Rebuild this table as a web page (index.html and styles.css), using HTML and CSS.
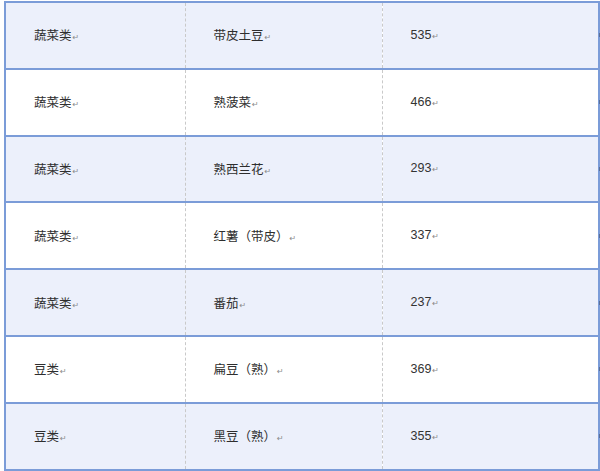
FILE: index.html
```html
<!DOCTYPE html>
<html>
<head>
<meta charset="utf-8">
<link rel="stylesheet" href="styles.css">
</head>
<body>
<div class="wrap">
<table class="grid">
<colgroup><col class="c1"><col class="c2"><col class="c3"></colgroup>
<tr class="alt"><td>蔬菜类<span class="rt">↵</span></td><td>带皮土豆<span class="rt">↵</span></td><td class="num">535<span class="rt">↵</span></td></tr>
<tr><td>蔬菜类<span class="rt">↵</span></td><td>熟菠菜<span class="rt">↵</span></td><td class="num">466<span class="rt">↵</span></td></tr>
<tr class="alt"><td>蔬菜类<span class="rt">↵</span></td><td>熟西兰花<span class="rt">↵</span></td><td class="num">293<span class="rt">↵</span></td></tr>
<tr><td>蔬菜类<span class="rt">↵</span></td><td>红薯（带皮）<span class="rt">↵</span></td><td class="num">337<span class="rt">↵</span></td></tr>
<tr class="alt"><td>蔬菜类<span class="rt">↵</span></td><td>番茄<span class="rt">↵</span></td><td class="num">237<span class="rt">↵</span></td></tr>
<tr><td>豆类<span class="rt">↵</span></td><td>扁豆（熟）<span class="rt">↵</span></td><td class="num">369<span class="rt">↵</span></td></tr>
<tr class="alt"><td>豆类<span class="rt">↵</span></td><td>黑豆（熟）<span class="rt">↵</span></td><td class="num">355<span class="rt">↵</span></td></tr>
</table>
</div>
</body>
</html>
```
FILE: styles.css
```css
html, body {
  margin: 0;
  padding: 0;
  background: #ffffff;
}
.wrap {
  padding: 1px 0 0 4px;
}
.grid {
  border-collapse: collapse;
  width: 594px;
  table-layout: fixed;
  font-family: "Noto Sans CJK SC", "Liberation Sans", sans-serif;
  font-size: 12.5px;
  color: #2e2e2e;
  border: 2px solid #7b9cd8;
}
.c1 { width: 180px; }
.c2 { width: 197px; }
.c3 { width: 217px; }
.grid tr {
  height: 66.8px;
}
.grid td {
  border-top: 2px solid #7b9cd8;
  border-bottom: 2px solid #7b9cd8;
  border-left: 1px dashed #c9c9c9;
  border-right: 1px dashed #c9c9c9;
  padding: 0 0 1px 28px;
  vertical-align: middle;
  white-space: nowrap;
}
.grid td:first-child {
  border-left: 2px solid #7b9cd8;
}
.grid td:last-child {
  border-right: 2px solid #7b9cd8;
  position: relative;
}
.grid td:last-child::after {
  content: "";
  position: absolute;
  right: -3px;
  top: 50%;
  width: 2px;
  height: 4px;
  margin-top: -2px;
  background: #5a6f99;
}
.grid tr.alt td {
  background: #ecf0fb;
}
.num {
  font-family: "Liberation Sans", sans-serif;
  font-size: 12.5px;
  color: #333333;
}
.rt {
  font-family: "DejaVu Sans", sans-serif;
  font-size: 8px;
  color: #8a8a8a;
  margin-left: 1px;
}
```
